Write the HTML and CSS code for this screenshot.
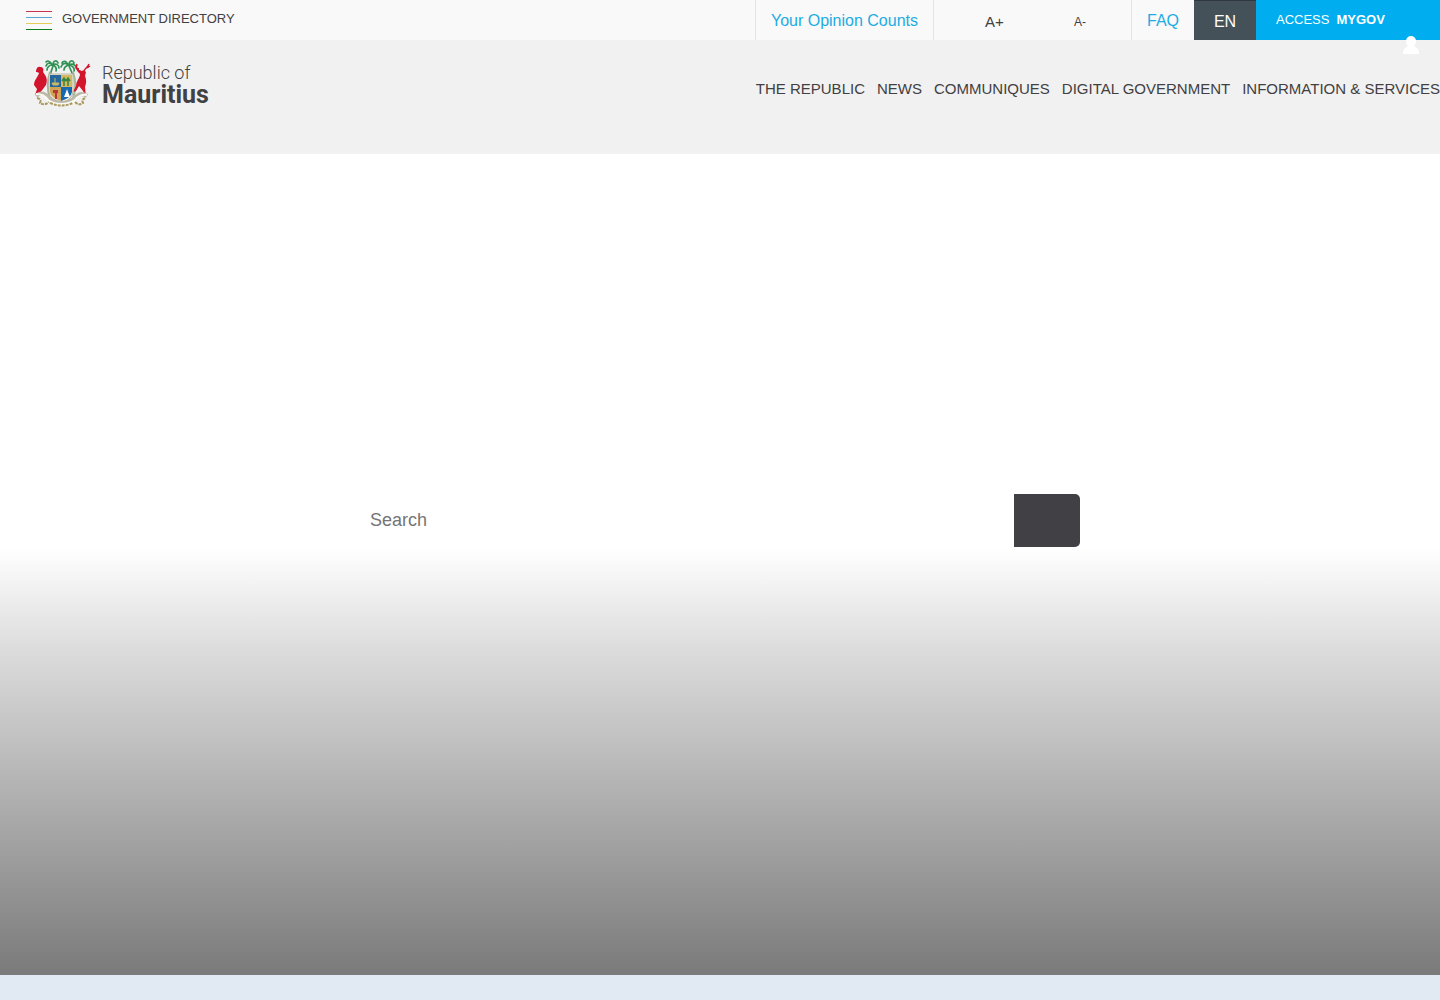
FILE: index.html
```html
<!DOCTYPE html>
<html lang="en">
<head>
<meta charset="utf-8">
<meta name="viewport" content="width=device-width, initial-scale=1">
<title>Republic of Mauritius</title>
<link rel="stylesheet" href="styles.css">
</head>
<body>
<header>
  <div class="topbar">
    <button class="directory" type="button">
      <span class="bars" aria-hidden="true"><i class="bar red"></i><i class="bar blue"></i><i class="bar yellow"></i><i class="bar green"></i></span>
      <span>GOVERNMENT DIRECTORY</span>
    </button>
    <a class="top-link opinion" href="#">Your Opinion Counts</a>
    <div class="sizes">
      <button class="size larger" type="button">A+</button>
      <button class="size smaller" type="button">A-</button>
    </div>
    <a class="top-link faq" href="#">FAQ</a>
    <button class="language" type="button">EN</button>
    <a class="access" href="#"><span>ACCESS</span><strong>MYGOV</strong>
      <svg class="user" width="18" height="18" viewBox="0 0 18 18" aria-hidden="true"><path fill="#fff" d="M9 0a5 5 0 0 1 5 5c0 2-1 4-2 5l3 2c1 1 2 3 2 6H1c0-3 1-5 2-6l3-2C5 9 4 7 4 5a5 5 0 0 1 5-5z"/></svg>
    </a>
  </div>
  <div class="masthead">
    <a class="brand" href="#">
      <svg class="crest" width="60" height="48" viewBox="0 0 60 48" aria-hidden="true">
        <g fill="none" stroke="#319253" stroke-width="1.700" stroke-linecap="round">
          <path d="M21 6l-3 9M21 5c-3-3-6-2-7 1M20 5c-2-5-5-4-6-3M21 5c0-5 4-5 5-2M21 5c3-2 6 0 6 3M20 5c-3 0-5 3-5 5M21 5c2 1 4 3 3 6"/>
          <path d="M37 6l4 9M36 5c-3-3-6-1-7 2M36 5c-2-5-5-4-6-2M37 5c0-5 4-5 5-2M37 5c4-2 7 0 7 3M36 5c-2 1-4 3-4 5M38 5c2 1 5 3 4 6"/>
        </g>
        <path d="M18 12c-3 9-3 18 0 26M41 12c3 9 3 18 0 26" fill="none" stroke="#a3b696" stroke-width="2"/>
        <path fill="#d3142d" d="M4 12c0-2 1-6 4-5 3 0 4 2 3 5 3 4 5 7 3 13l-3 4c-2 3-4 5-8 6l2-6-3-4c0-5 4-8 5-12-1-1-2-1-3-1z"/>
        <path fill="#d3142d" d="M46 12l-2-3 3 1 3 1c2-1 3 0 4 1l-1 4c2 5 1 8 0 11l1 10-3-6-4-5-3 5-3 1 3-6c0-5 4-8 4-12z"/>
        <path d="M49 12c-5-2-5-5-4-8M52 12c0-4 3-3 5-8M47 9l-3-1M55 8l3-2" fill="none" stroke="#d3142d" stroke-width="1.500"/>
        <path fill="#f5efe1" stroke="#b6b2a0" d="M17 14h24v18q-1 8-12 11-11-3-12-11z"/>
        <path fill="#25679b" d="M18 15h11v12H18z"/><path fill="#d5b961" d="M29 15h11v12H29z"/>
        <path fill="#d0a455" d="M18 27h11v14q-10-3-11-9z"/><path fill="#1768ad" d="M29 27h11v5q-1 6-11 9z"/>
        <path d="M20 23h7l-1 2h-5zM23 18v5" fill="#c6b86a" stroke="#c6b86a"/>
        <path d="M32 26v-7m4 7v-7m-6 2l2-3 2 3m0 0l2-3 2 3" fill="none" stroke="#328441" stroke-width="1.500"/>
        <path d="M21 30h5v3h-1v6h-2v-6h-2z" fill="#b93638"/><path d="M35 29l1 3 2 5h-6l2-5z" fill="#fff"/>
        <path d="M4 36q7-6 14 3 12 8 24 0 6-8 13-3" fill="none" stroke="#bcb9ab" stroke-width="4"/>
        <path d="M4 34q8 0 12 6 13 8 27 0 5-6 12-5M16 42q13 7 28 0" fill="none" stroke="#fbfaf5" stroke-width="2"/>
        <path d="M5 38q5 1 3 5 5 3 9-1M43 42q4 4 8 1-2-4 3-5M18 43q12 5 23 0" fill="none" stroke="#aa975e" stroke-width="2" stroke-dasharray="3 1"/>
      </svg>
      <span class="wordmark"><span class="republic">Republic of</span><strong class="country">Mauritius</strong></span>
    </a>
    <nav class="menu">
      <a href="#">THE REPUBLIC</a>
      <a href="#">NEWS</a>
      <a href="#">COMMUNIQUES</a>
      <a href="#">DIGITAL GOVERNMENT</a>
      <a href="#">INFORMATION &amp; SERVICES</a>
    </nav>
  </div>
</header>
<main class="hero">
  <form class="search" role="search">
    <input type="search" placeholder="Search" aria-label="Search">
    <button type="submit" aria-label="Submit search"></button>
  </form>
</main>
</body>
</html>
```
FILE: styles.css
```css
* { box-sizing: border-box; }
body {
  margin: 0;
  background: #e1e9f2;
  color: #414042;
  font-family: "Liberation Sans", Arial, sans-serif;
}
a { color: inherit; text-decoration: none; }
button { border: 0; padding: 0; background: none; color: inherit; font: inherit; cursor: pointer; }

.topbar { display: flex; height: 40px; background: #f9f9f9; }
.directory {
  display: flex;
  align-items: flex-start;
  gap: 10px;
  margin-right: auto;
  padding: 11px 0 0 26px;
  font-size: 13px;
  line-height: 16px;
}
.bars { display: grid; gap: 5px; width: 26px; }
.bar { height: 1px; }
.red { background: #c8324e; }
.blue { background: #58a5d8; }
.yellow { background: #e4cd58; }
.green { background: #087f1b; }
.top-link {
  padding: 1px 15px 0;
  border-left: 1px solid #e5e5e5;
  color: #1cace3;
  font-size: 16px;
  line-height: 40px;
}
.sizes {
  display: flex;
  justify-content: space-between;
  width: 198px;
  padding: 3px 45px 0 51px;
  border-left: 1px solid #e5e5e5;
}
.larger { font-size: 15px; }
.smaller { font-size: 12px; }
.language {
  width: 62px;
  padding-top: 2px;
  border-top: 1px solid #2f383e;
  background: #455159;
  color: #fff;
  font-size: 16px;
}
.access {
  position: relative;
  display: flex;
  gap: 7px;
  width: 184px;
  padding-left: 20px;
  background: #00aeef;
  color: #fff;
  font-size: 13px;
  line-height: 40px;
}
.user { position: absolute; right: 20px; top: 36px; }

.masthead {
  display: flex;
  justify-content: space-between;
  align-items: flex-start;
  height: 114px;
  padding-top: 20px;
  background: #f1f1f1;
}
.brand { display: flex; gap: 10px; padding-left: 32px; }
.wordmark { display: flex; flex-direction: column; padding-top: 2px; font-family: Roboto, sans-serif; }
.republic { font-size: 18px; font-weight: 300; line-height: 21px; }
.country { font-size: 25px; font-weight: 700; line-height: 24px; }
.menu { display: flex; gap: 12px; padding-top: 19px; font-size: 15px; line-height: 20px; white-space: nowrap; }

.hero {
  display: flex;
  justify-content: center;
  align-items: flex-start;
  height: 821px;
  padding-top: 340px;
  background: linear-gradient(#fff 48%, #ddd 60%, #7a7a7a);
}
.search { display: flex; width: 50%; height: 53px; }
.search input {
  flex: 1;
  min-width: 0;
  padding: 0 10px;
  border: 0;
  background: #fff;
  font: 18px "Liberation Sans", Arial, sans-serif;
}
.search input::placeholder { color: #757575; }
.search button { width: 66px; border-radius: 0 5px 5px 0; background: #414045; }
```
